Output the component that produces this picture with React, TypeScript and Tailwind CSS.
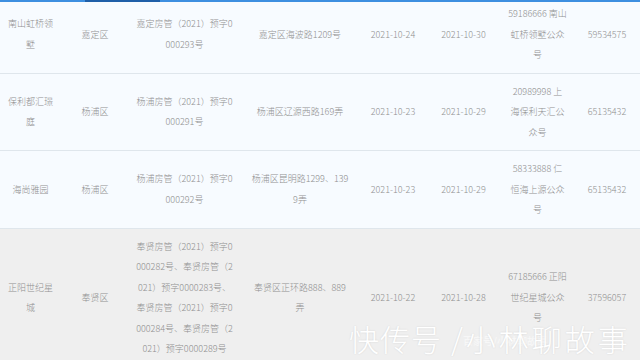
const rows = [
	{
		name: ["南山虹桥领", "墅"],
		district: ["嘉定区"],
		permit: ["嘉定房管（2021）预字0", "000293号"],
		address: ["嘉定区海波路1209号"],
		start: "2021-10-24",
		end: "2021-10-30",
		account: ["59186666 南山", "虹桥领墅公众", "号"],
		phone: "59534575",
	},
	{
		name: ["保利都汇璟", "庭"],
		district: ["杨浦区"],
		permit: ["杨浦房管（2021）预字0", "000291号"],
		address: ["杨浦区辽源西路169弄"],
		start: "2021-10-23",
		end: "2021-10-29",
		account: ["20989998 上", "海保利天汇公", "众号"],
		phone: "65135432",
	},
	{
		name: ["海尚雅园"],
		district: ["杨浦区"],
		permit: ["杨浦房管（2021）预字0", "000292号"],
		address: ["杨浦区昆明路1299、139", "9弄"],
		start: "2021-10-23",
		end: "2021-10-29",
		account: ["58333888 仁", "恒海上源公众", "号"],
		phone: "65135432",
	},
	{
		name: ["正阳世纪星", "城"],
		district: ["奉贤区"],
		permit: [
			"奉贤房管（2021）预字0",
			"000282号、奉贤房管（2",
			"021）预字0000283号、",
			"奉贤房管（2021）预字0",
			"000284号、奉贤房管（2",
			"021）预字0000289号",
		],
		address: ["奉贤区正环路888、889", "弄"],
		start: "2021-10-22",
		end: "2021-10-28",
		account: ["67185666 正阳", "世纪星城公众", "号"],
		phone: "37596057",
	},
]

function Cell({ lines }: { lines: string[] }) {
	return (
		<div className="flex items-center justify-center text-center">
			<div>
				{lines.map((l, i) => (
					<div key={i} className="whitespace-nowrap">
						{l}
					</div>
				))}
			</div>
		</div>
	)
}

export default function App() {
	return (
		<div
			className="relative h-[360px] w-[640px] overflow-hidden bg-[#efefef] text-[9px] leading-[20.5px] text-[#909090]"
			style={{ fontFamily: '"Noto Sans CJK SC", "Noto Sans", sans-serif' }}
		>
			<div className="flex h-[2px] bg-[#3d8fe0]">
				<div className="ml-[85px] w-[75px] bg-[#1f5fa8]" />
			</div>
			{rows.map((r, i) => (
				<div
					key={i}
					className={
						"grid grid-cols-[61px_68px_111px_120px_66px_75px_73px_66px] font-light " +
						(i === 3
							? "bg-[#efefef] pt-2 pb-2"
							: i === 0
								? "border-b border-[#dfe6ec] bg-[#f7fbff] pt-[2px] pb-[7px]"
								: "border-b border-[#dfe6ec] bg-[#f7fbff] pt-2 pb-[7px]")
					}
				>
					<Cell lines={r.name} />
					<Cell lines={r.district} />
					<Cell lines={r.permit} />
					<Cell lines={r.address} />
					<Cell lines={[r.start]} />
					<Cell lines={[r.end]} />
					<Cell lines={r.account} />
					<Cell lines={[r.phone]} />
				</div>
			))}
			<div className="absolute left-[463px] top-[336px] text-[10px] leading-none text-white/60">百家号/小林聊故事</div>
			<div className="absolute left-[349px] top-[323px] flex items-center text-[30px] leading-none font-light text-white [text-shadow:0_0_2px_rgba(0,0,0,0.12)]">
				<span className="tracking-[1px]">快传号</span>
				<span className="ml-[9px] mr-[3px]">/</span>
				<span className="tracking-[3px]">小林聊故事</span>
			</div>
		</div>
	)
}
